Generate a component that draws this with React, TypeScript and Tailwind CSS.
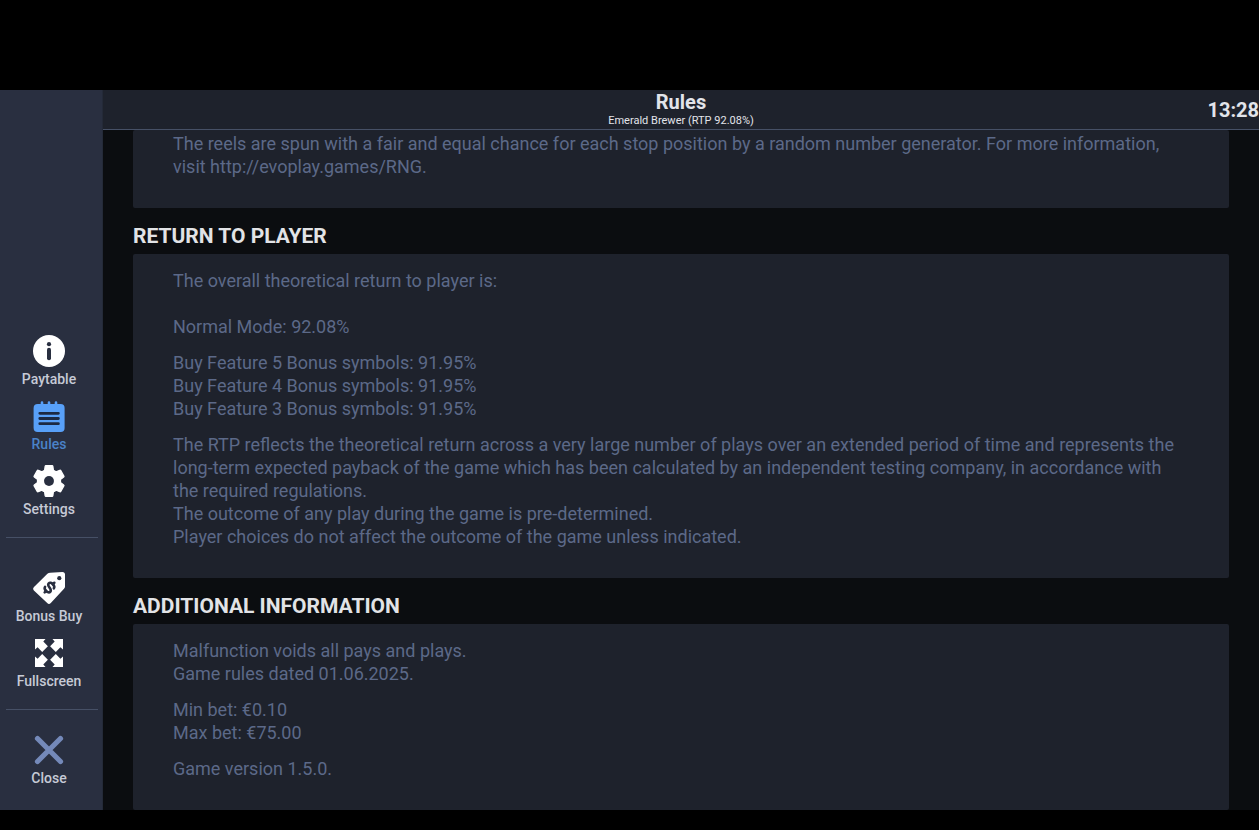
import type { ReactNode } from 'react'
import clsx from 'clsx'

const sections = [
  {
    title: '',
    paragraphs: [
      [
        'The reels are spun with a fair and equal chance for each stop position by a random number generator. For more information,',
        'visit http://evoplay.games/RNG.',
      ],
    ],
  },
  {
    title: 'RETURN TO PLAYER',
    paragraphs: [
      ['The overall theoretical return to player is:', '', 'Normal Mode: 92.08%'],
      [
        'Buy Feature 5 Bonus symbols: 91.95%',
        'Buy Feature 4 Bonus symbols: 91.95%',
        'Buy Feature 3 Bonus symbols: 91.95%',
      ],
      [
        'The RTP reflects the theoretical return across a very large number of plays over an extended period of time and represents the',
        'long-term expected payback of the game which has been calculated by an independent testing company, in accordance with',
        'the required regulations.',
        'The outcome of any play during the game is pre-determined.',
        'Player choices do not affect the outcome of the game unless indicated.',
      ],
    ],
  },
  {
    title: 'ADDITIONAL INFORMATION',
    paragraphs: [
      ['Malfunction voids all pays and plays.', 'Game rules dated 01.06.2025.'],
      ['Min bet: €0.10', 'Max bet: €75.00'],
      ['Game version 1.5.0.'],
    ],
  },
]

function Icon({ children }: { children: ReactNode }) {
  return (
    <svg viewBox="0 0 32 32" className="size-8" fill="currentColor" aria-hidden="true">
      {children}
    </svg>
  )
}

const InfoIcon = () => (
  <Icon>
    <circle cx="16" cy="16" r="16" />
    <circle cx="16" cy="9.2" r="2.1" fill="#292f40" />
    <rect x="14" y="12.8" width="4" height="12.4" rx="2" fill="#292f40" />
  </Icon>
)

const RulesIcon = () => (
  <Icon>
    <rect x="0.6" y="4" width="31" height="28" rx="4" />
    <path d="M9 6V2.5M16 6V2.5M23 6V2.5" stroke="currentColor" strokeWidth="2.6" strokeLinecap="round" />
    <path d="M6.8 13.3h18.6M6.8 18.5h18.6M6.8 23.7h18.6" stroke="#1c2942" strokeWidth="2.8" strokeLinecap="round" />
  </Icon>
)

const SettingsIcon = () => (
  <svg viewBox="2 2 20 20" className="size-8" fill="currentColor" aria-hidden="true">
    <path
      stroke="currentColor"
      strokeWidth="0.8"
      strokeLinejoin="round"
      d="M19.14 12.94c.04-.3.06-.61.06-.94 0-.32-.02-.64-.07-.94l2.03-1.58a.49.49 0 0 0 .12-.61l-1.92-3.32a.488.488 0 0 0-.59-.22l-2.39.96c-.5-.38-1.03-.7-1.62-.94l-.36-2.54a.484.484 0 0 0-.48-.41h-3.84c-.24 0-.43.17-.47.41l-.36 2.54c-.59.24-1.13.57-1.62.94l-2.39-.96c-.22-.08-.47 0-.59.22L2.74 8.87c-.12.21-.08.47.12.61l2.03 1.58c-.05.3-.09.63-.09.94s.02.64.07.94l-2.03 1.58a.49.49 0 0 0-.12.61l1.92 3.32c.12.22.37.29.59.22l2.39-.96c.5.38 1.03.7 1.62.94l.36 2.54c.05.24.24.41.48.41h3.84c.24 0 .44-.17.47-.41l.36-2.54c.59-.24 1.13-.56 1.62-.94l2.39.96c.22.08.47 0 .59-.22l1.92-3.32c.12-.22.07-.47-.12-.61l-2.01-1.58z"
    />
    <circle cx="12" cy="12" r="3.1" fill="#292f40" />
  </svg>
)

const BonusIcon = () => (
  <Icon>
    <path d="M17.2.8 29.4 0Q32 0 32 2.6V14.4Q32 15.8 31 16.8L17.8 31Q16 32.8 14.2 31L.9 18.6Q-.7 16.8 1 15L14.4 1.8Q15.6.8 17.2.8Z" />
    <circle cx="26.3" cy="6.2" r="2.1" fill="#292f40" />
    <g
      transform="translate(16.5 15.6) rotate(45)"
      fill="none"
      stroke="#292f40"
      strokeWidth="2.6"
      strokeLinecap="round"
    >
      <path d="M3.6-2.6C3.2-4.3 1.6-4.8 0-4.8c-2 0-3.5.9-3.5 2.4C-3.5-.8-2-.3 0 0s3.5.9 3.5 2.4S2 4.8 0 4.8c-1.8 0-3.3-.5-3.7-2.2" />
      <path d="M0-4.8v-2M0 4.8v2" />
    </g>
  </Icon>
)

const FullscreenIcon = () => (
  <Icon>
    <path id="arrow" d="M2 2h10.5l-2.200 2.600 4.600 4.600-5.700 5.700-4.600-4.600L2 12.500z" />
    <use href="#arrow" transform="rotate(90 16 16)" />
    <use href="#arrow" transform="rotate(180 16 16)" />
    <use href="#arrow" transform="rotate(270 16 16)" />
  </Icon>
)

const CloseIcon = () => (
  <Icon>
    <path d="M4.5 4.5l23 23M27.5 4.5l-23 23" stroke="#7489b9" strokeWidth="5.2" strokeLinecap="round" />
  </Icon>
)

function NavItem({ label, icon, active }: { label: string; icon: ReactNode; active?: boolean }) {
  return (
    <button type="button" className="flex w-full flex-col items-center gap-1 pr-1">
      <span className={active ? 'text-[#58a0f8]' : 'text-white'}>{icon}</span>
      <span className={clsx('text-sm leading-4 font-medium', active ? 'text-[#4a82c8]' : 'text-[#c6cad6]')}>
        {label}
      </span>
    </button>
  )
}

function Sidebar() {
  return (
    <nav className="flex w-[103px] shrink-0 flex-col justify-end border-r border-[#242a38] bg-[#292f40] pb-6">
      <div className="flex flex-col gap-[13px] pb-5">
        <NavItem label="Paytable" icon={<InfoIcon />} />
        <NavItem label="Rules" icon={<RulesIcon />} active />
        <NavItem label="Settings" icon={<SettingsIcon />} />
      </div>
      <hr className="mr-1 ml-1.5 border-[#465066]" />
      <div className="flex flex-col gap-[13px] pt-[34px] pb-5">
        <NavItem label="Bonus Buy" icon={<BonusIcon />} />
        <NavItem label="Fullscreen" icon={<FullscreenIcon />} />
      </div>
      <hr className="mr-1 ml-1.5 border-[#465066]" />
      <div className="pt-6">
        <NavItem label="Close" icon={<CloseIcon />} />
      </div>
    </nav>
  )
}

export default function App() {
  return (
    <div className="flex h-screen flex-col bg-black pt-[90px] pb-5 font-[Roboto,sans-serif]">
      <div className="flex min-h-0 flex-1">
        <Sidebar />

        <div className="flex min-w-0 flex-1 flex-col bg-[#0b0d10]">
          <header className="grid h-10 shrink-0 grid-cols-[1fr_auto_1fr] items-center border-b border-[#465066] bg-[#1e222c]">
            <div className="col-start-2 self-start text-center text-[#e2e4ea]">
              <h1 className="text-xl leading-6 font-bold">Rules</h1>
              <p className="text-[11px] leading-[13px]">Emerald Brewer (RTP 92.08%)</p>
            </div>
            <time className="text-right text-xl font-bold text-[#e2e4ea]">13:28</time>
          </header>

          <main className="min-h-0 flex-1 overflow-y-auto px-[30px] [scrollbar-width:none]">
            {sections.map((s, i) => (
              <section key={i}>
                {s.title && (
                  <h2 className="flex h-[46px] items-center pt-3 text-[21px] font-bold text-[#e2e3e6]">{s.title}</h2>
                )}
                <div
                  className={clsx(
                    'space-y-[13px] rounded-xs bg-[#1e222c] px-10 pb-[30px] text-lg leading-[23px] text-[#5c6988]',
                    s.title ? 'pt-[15px]' : 'pt-0.5',
                  )}
                >
                  {s.paragraphs.map((lines, j) => (
                    <p key={j}>
                      {lines.map((line, k) => (
                        <span key={k} className="block min-h-[23px]">
                          {line}
                        </span>
                      ))}
                    </p>
                  ))}
                </div>
              </section>
            ))}
          </main>
        </div>
      </div>
    </div>
  )
}
